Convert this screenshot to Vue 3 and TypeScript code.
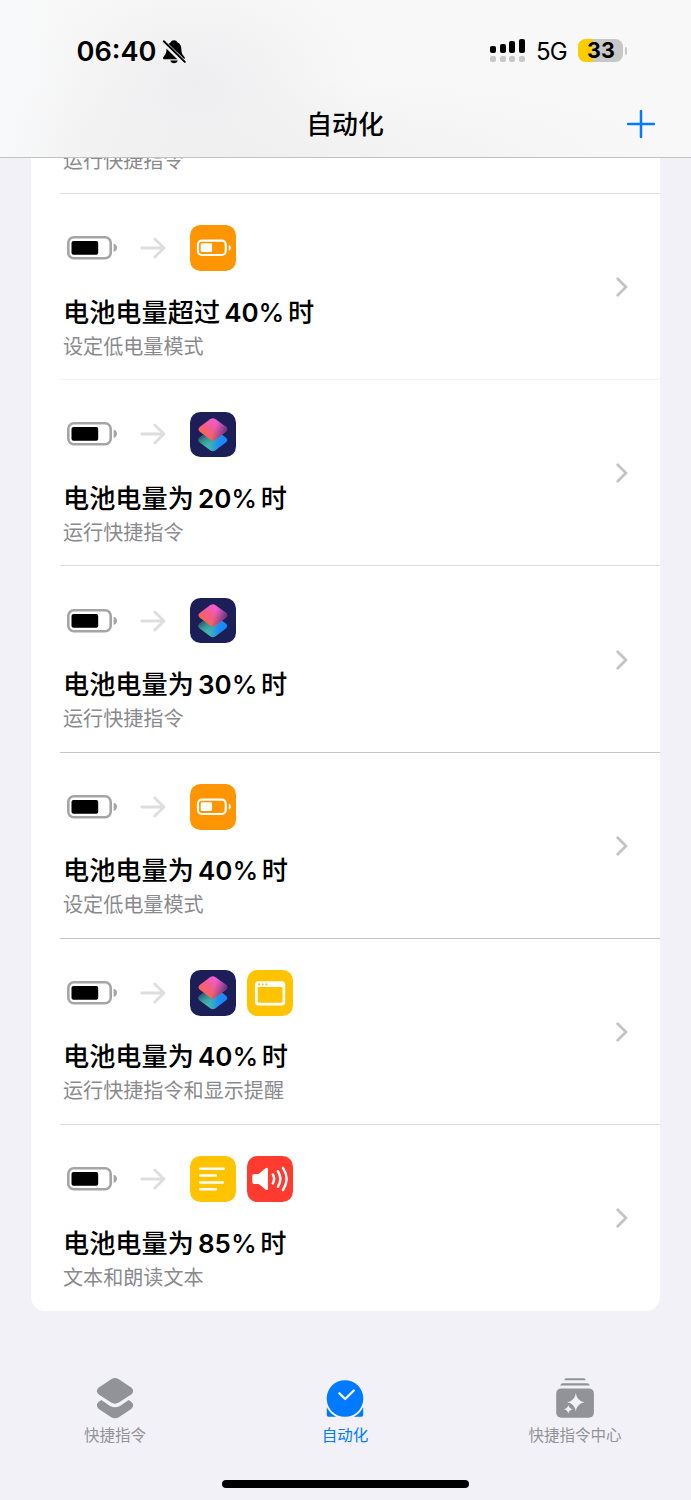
<script setup lang="ts">
type Action = 'power' | 'shortcut' | 'alert' | 'text' | 'speak'

interface Automation {
  prefix: string
  level: number
  subtitle: string
  actions: Action[]
  tone: string
}

const automations: Automation[] = [
  { prefix: '电池电量超过', level: 40, subtitle: '设定低电量模式', actions: ['power'], tone: 'faint' },
  { prefix: '电池电量为', level: 20, subtitle: '运行快捷指令', actions: ['shortcut'], tone: 'light' },
  { prefix: '电池电量为', level: 30, subtitle: '运行快捷指令', actions: ['shortcut'], tone: 'dark' },
  { prefix: '电池电量为', level: 40, subtitle: '设定低电量模式', actions: ['power'], tone: 'dark' },
  { prefix: '电池电量为', level: 40, subtitle: '运行快捷指令和显示提醒', actions: ['shortcut', 'alert'], tone: 'light' },
  { prefix: '电池电量为', level: 85, subtitle: '文本和朗读文本', actions: ['text', 'speak'], tone: 'none' },
]

const signalBars = [7, 9, 12, 14.5]
</script>

<template>
  <div class="screen">
    <header class="top">
      <div class="status">
        <span class="time">06:40</span>
        <svg class="bell" viewBox="0 0 24 26">
          <path d="M12 1.2C10 1.2 8.9 2.3 8.5 3.6C5.6 4.8 4.6 7.4 4.5 10.5C4.3 15 2.9 16 1.4 18C.6 19.4 1.3 20.3 2.6 20.3H21.3C22.8 20.3 23.3 19.2 22.5 18C20.9 16 19.6 15 19.4 10.5C19.3 7.2 18.4 4.8 15.5 3.6C15.1 2.3 14 1.2 12 1.2Z" />
          <path d="M8.3 21.6H15.7C15.2 23.4 13.9 24.3 12 24.3S8.8 23.4 8.3 21.6Z" />
          <path class="gap" d="M1.4 3.2L22.4 23.6" />
          <path class="slash" d="M1.8 2.3L22.8 22.9" />
        </svg>
        <div class="signal">
          <span v-for="h in signalBars" :key="h" class="signal-col">
            <i class="bar" :style="{ height: h + 'px' }"></i>
            <i class="dot"></i>
          </span>
        </div>
        <span class="network">5G</span>
        <span class="charge">33</span>
        <i class="charge-nub"></i>
      </div>
      <div class="nav">
        <h1>自动化</h1>
        <svg class="plus" viewBox="0 0 28 28"><path d="M14 1V27M1 14H27" /></svg>
      </div>
    </header>

    <main>
      <section class="card">
        <div class="partial">
          <div class="subtitle">运行快捷指令</div>
        </div>
        <i class="line light"></i>
        <article v-for="(item, i) in automations" :key="i" class="row">
          <div class="body">
            <div class="flow">
              <svg class="battery" viewBox="0 0 51 24">
                <rect x="1.3" y="1.3" width="42.4" height="21" rx="5.6" fill="none" stroke="#a5a5a7" stroke-width="2.6" />
                <rect x="4.5" y="4.9" width="26.7" height="13.9" rx="2" />
                <path d="M46.6 7.7C51.2 8.6 51.2 15.1 46.6 16Z" fill="#a5a5a7" />
              </svg>
              <svg class="arrow" viewBox="0 0 26 22"><path d="M1.8 11H24M14.8 2L24 11L14.8 20" /></svg>
              <div class="tiles">
                <span v-for="action in item.actions" :key="action" class="tile" :class="action">
                  <svg v-if="action === 'power'" viewBox="0 0 46 46">
                    <rect x="8" y="15.8" width="28" height="14.4" rx="4" fill="none" stroke="#fff" stroke-width="2.2" />
                    <rect x="10.8" y="18.5" width="11.4" height="8.8" rx="1.3" fill="#fff" />
                    <path d="M39 20C41.9 20.8 41.9 25.2 39 26Z" fill="#fff" />
                  </svg>
                  <svg v-else-if="action === 'shortcut'" viewBox="0 0 46 46">
                    <defs>
                      <linearGradient :id="'low' + i" x1="9" y1="0" x2="37" y2="0" gradientUnits="userSpaceOnUse">
                        <stop offset="0" stop-color="#4cc9a2" />
                        <stop offset=".4" stop-color="#3eb3b5" />
                        <stop offset=".72" stop-color="#1d8cf5" />
                        <stop offset="1" stop-color="#1688ff" />
                      </linearGradient>
                      <linearGradient :id="'shade' + i" x1="12" y1="23" x2="21" y2="35" gradientUnits="userSpaceOnUse">
                        <stop offset="0" stop-color="#294674" />
                        <stop offset="1" stop-color="#38b59e" stop-opacity="0" />
                      </linearGradient>
                      <linearGradient :id="'high' + i" x1="27" y1="8" x2="15" y2="25" gradientUnits="userSpaceOnUse">
                        <stop offset="0" stop-color="#f45bdc" />
                        <stop offset=".55" stop-color="#f35c8a" />
                        <stop offset="1" stop-color="#fb6550" />
                      </linearGradient>
                      <linearGradient :id="'dusk' + i" x1="24" y1="17" x2="36" y2="21" gradientUnits="userSpaceOnUse">
                        <stop offset="0" stop-color="#76448c" stop-opacity="0" />
                        <stop offset="1" stop-color="#673079" />
                      </linearGradient>
                    </defs>
                    <path d="M20.2 18Q23 16 25.8 18L36 25.7Q39 28.2 36 30.7L25.8 38.4Q23 40.4 20.2 38.4L10 30.7Q7 28.2 10 25.7Z" :fill="`url(#low${i})`" />
                    <path d="M20.2 18Q23 16 25.8 18L36 25.7Q39 28.2 36 30.7L25.8 38.4Q23 40.4 20.2 38.4L10 30.7Q7 28.2 10 25.7Z" :fill="`url(#shade${i})`" />
                    <path d="M20.2 7.2Q23 5.2 25.8 7.2L36 14.9Q39 17.4 36 19.9L25.8 27.6Q23 29.6 20.2 27.6L10 19.9Q7 17.4 10 14.9Z" :fill="`url(#high${i})`" />
                    <path d="M20.2 7.2Q23 5.2 25.8 7.2L36 14.9Q39 17.4 36 19.9L25.8 27.6Q23 29.6 20.2 27.6L10 19.9Q7 17.4 10 14.9Z" :fill="`url(#dusk${i})`" />
                  </svg>
                  <svg v-else-if="action === 'alert'" viewBox="0 0 46 46">
                    <rect x="8" y="11.4" width="30.5" height="24.4" rx="3.6" fill="#fff" />
                    <rect x="10.8" y="17.2" width="25" height="15.8" rx="1.3" fill="#ffc300" />
                    <path d="M11.2 14.5H13.2M14.8 14.5H16.8M18.6 14.5H20.6" stroke="#ffc300" stroke-width="1.9" />
                  </svg>
                  <svg v-else-if="action === 'text'" viewBox="0 0 46 46">
                    <path d="M10.4 12.8H34M10.4 19.6H26M10.4 26.6H33M10.4 33.4H26" stroke="#fff" stroke-width="2.5" stroke-linecap="round" />
                  </svg>
                  <svg v-else viewBox="0 0 46 46">
                    <path d="M5.3 20Q5.3 18 7.3 18H11.8L18.6 12.3Q21.1 10.7 21.1 13.4V32.6Q21.1 35.4 18.6 33.7L11.8 28.3H7.3Q5.3 28.3 5.3 26.3Z" fill="#fff" />
                    <path d="M26 18.6Q28.6 23.1 26 27.6M31.1 15.2Q36.1 23.1 31.1 31M36.2 12Q43.6 23.1 36.2 34.2" fill="none" stroke="#fff" stroke-width="2.5" stroke-linecap="round" />
                  </svg>
                </span>
              </div>
            </div>
            <h2>{{ item.prefix }}<b>{{ item.level }}<span class="percent">%</span></b>时</h2>
            <div class="subtitle">{{ item.subtitle }}</div>
          </div>
          <svg class="chevron" viewBox="0 0 12 20"><path d="M1.7 1.7L10 10L1.7 18.3" /></svg>
          <i v-if="item.tone !== 'none'" class="line" :class="item.tone"></i>
        </article>
      </section>
    </main>

    <nav class="tabs">
      <a class="tab">
        <svg viewBox="0 0 40 44">
          <path d="M16.2 3.2Q20 .9 23.8 3.2L36.2 11.4Q40.2 15 36.2 18.4L23.8 26.6Q20 28.9 16.2 26.6L3.8 18.4Q-.2 15 3.8 11.4Z" />
          <path d="M6.3 24L3.8 25.8Q-.2 29.3 3.8 33L16.2 41.2Q20 43.5 23.8 41.2L36.2 33Q40.2 29.3 36.2 25.8L33.7 24L25 29.9Q20 32.6 15 29.9Z" />
        </svg>
        <span>快捷指令</span>
      </a>
      <a class="tab active">
        <svg viewBox="0 0 40 44">
          <circle cx="20" cy="22.5" r="18.3" />
          <path d="M1.8 31.2C4 35.6 7.3 38.8 11.2 40.7H3.4Q1.8 40.7 1.8 39.1ZM38.2 31.2C36 35.6 32.7 38.8 28.8 40.7H36.6Q38.2 40.7 38.2 39.1Z" />
          <path class="hands" d="M14.4 17.3L20.2 23L28.8 14.5" />
        </svg>
        <span>自动化</span>
      </a>
      <a class="tab">
        <svg viewBox="0 0 40 44">
          <path d="M9.2 4.3Q9.7 2.3 11.2 2.3H28.7Q30.3 2.3 30.8 4.3ZM5.1 9.4Q5.9 7.2 7.9 7.2H32.1Q34.1 7.2 34.9 9.4Z" />
          <rect x="1.2" y="12.4" width="37.7" height="29.4" rx="5" />
          <path class="spark" d="M20.8 17.2Q22 24.8 29.4 26.2Q22 27.6 20.8 35.2Q19.6 27.6 12.2 26.2Q19.6 24.8 20.8 17.2ZM13.3 29Q13.9 32.5 17.9 33.3Q13.9 34.1 13.3 37.6Q12.7 34.1 8.9 33.3Q12.7 32.5 13.3 29Z" />
        </svg>
        <span>快捷指令中心</span>
      </a>
    </nav>
    <i class="home"></i>
  </div>
</template>

<style>
html,
body {
  background: #f2f1f7;
}
</style>

<style scoped>
.screen {
  width: 691px;
  height: 1500px;
  display: flex;
  flex-direction: column;
  overflow: hidden;
  background: #f2f1f7;
  color: #000;
  font-family: Inter, 'Noto Sans CJK SC', sans-serif;
}
.top {
  box-sizing: border-box;
  flex: none;
  height: 158px;
  border-bottom: 1px solid #c2c2c4;
  background:
    linear-gradient(90deg, #f8f9fb 0, rgba(248, 249, 251, 0) 70px),
    radial-gradient(ellipse 170px 120px at 195px 85px, #eeeef0 0%, rgba(238, 238, 240, 0) 100%),
    radial-gradient(ellipse 420px 80px at 250px 158px, #f0f0f0 0%, rgba(240, 240, 240, 0) 100%),
    #f8f8f8;
}
.status {
  display: flex;
  align-items: center;
  height: 102px;
  padding-left: 76.5px;
}
.time {
  width: 85.5px;
  font-size: 27.2px;
  font-weight: 600;
  white-space: nowrap;
}
.bell {
  width: 24px;
  height: 26px;
  margin-top: 1px;
}
.gap,
.slash {
  fill: none;
  stroke-linecap: round;
}
.gap {
  stroke: #f0f0f2;
  stroke-width: 5;
}
.slash {
  stroke: #000;
  stroke-width: 1.9;
}
.signal {
  display: flex;
  align-items: flex-end;
  gap: 3.4px;
  height: 24px;
  margin-left: 304px;
  margin-top: -2px;
}
.signal-col {
  display: flex;
  flex-direction: column;
  gap: 3px;
}
.bar,
.dot {
  display: block;
  width: 6.2px;
  border-radius: 2px;
  background: #000;
}
.dot {
  height: 6px;
  background: #c8c8c9;
}
.network {
  width: 42.5px;
  margin-left: 11px;
  font-size: 24px;
  letter-spacing: -0.7px;
  margin-top: 1px;
}
.charge {
  width: 45px;
  height: 23px;
  border-radius: 7.5px;
  background: linear-gradient(90deg, #ffcc00 33.5%, #c7c7c8 33.5%);
  font-size: 21.5px;
  font-weight: 700;
  line-height: 23px;
  text-align: center;
  margin-top: -1px;
}
.charge-nub {
  width: 2.6px;
  height: 7.5px;
  margin-left: 1.3px;
  border-radius: 0 4px 4px 0;
  background: #c7c7c8;
}
.nav {
  display: grid;
  grid-template-columns: 1fr auto 1fr;
  align-items: center;
  height: 42px;
  padding: 0 36px;
}
.nav h1 {
  grid-column: 2;
  margin: 2px 0 0 -1px;
  font-size: 25.9px;
  font-weight: 500;
  line-height: 42px;
}
.plus {
  justify-self: end;
  width: 28px;
  height: 28px;
  fill: none;
  stroke: #007aff;
  stroke-width: 2.5;
  stroke-linecap: round;
}
main {
  flex: none;
  height: 1199px;
  padding: 0 31.5px 0 31px;
  overflow: hidden;
}
.card {
  border-radius: 0 0 14px 14px;
  background: #fff;
}
.partial {
  display: flex;
  align-items: flex-end;
  height: 35.2px;
  padding: 0 0 0 32px;
}
.partial .subtitle {
  margin-bottom: 16.4px;
}
.line {
  display: block;
  height: 1px;
  margin-left: 29px;
}
.light {
  background: #dedee0;
}
.faint {
  background: #f1f1f2;
}
.dark {
  background: #c6c6c8;
}
.row {
  display: grid;
  grid-template-columns: 1fr 12px;
  grid-template-rows: 1fr auto;
  height: 186.15px;
  padding: 0 32px;
}
.row .line {
  grid-column: 1 / 3;
  margin: 0 -32px 0 -3px;
}
.body {
  padding-top: 31.1px;
}
.flow {
  display: flex;
  align-items: center;
  height: 46px;
}
.battery {
  width: 51px;
  height: 24px;
  margin-left: 3.7px;
}
.arrow {
  width: 26px;
  height: 22px;
  margin-left: 22.4px;
  fill: none;
  stroke: #dededf;
  stroke-width: 2.9;
  stroke-linecap: round;
  stroke-linejoin: round;
}
.tiles {
  display: flex;
  gap: 11.3px;
  margin-left: 23.8px;
}
.tile {
  width: 45.7px;
  height: 45.7px;
  border-radius: 10.5px;
  overflow: hidden;
}
.tile svg {
  display: block;
  width: 100%;
  height: 100%;
}
.power {
  background: #ff9500;
}
.shortcut {
  background: #1c1e58;
}
.alert,
.text {
  background: #ffc300;
}
.speak {
  background: #ff3b30;
}
h2 {
  margin: 23.6px 0 0;
  font-size: 26.2px;
  font-weight: 500;
  line-height: 36px;
  white-space: nowrap;
}
h2 b {
  margin: 0 3.5px 0 4px;
  font-size: 26px;
  font-weight: 600;
}
.percent {
  font-weight: 500;
}
.subtitle {
  font-size: 20.1px;
  line-height: 32px;
  color: #8a8a8e;
  white-space: nowrap;
}
.chevron {
  align-self: center;
  width: 12px;
  height: 20px;
  margin-top: 1px;
  fill: none;
  stroke: #c4c4c6;
  stroke-width: 2.8;
  stroke-linecap: round;
  stroke-linejoin: round;
}
.tabs {
  display: grid;
  grid-template-columns: repeat(3, 1fr);
  width: 690px;
  height: 90px;
  padding-top: 19px;
}
.tab {
  display: flex;
  flex-direction: column;
  align-items: center;
  color: #929397;
  font-size: 15.5px;
  line-height: 20px;
}
.tab svg {
  width: 40px;
  height: 44px;
  margin-bottom: 6px;
  fill: currentColor;
}
.active {
  color: #007aff;
}
.tab .hands {
  fill: none;
  stroke: #f2f1f7;
  stroke-width: 2.4;
  stroke-linecap: round;
  stroke-linejoin: round;
}
.spark {
  fill: #f2f1f7;
}
.home {
  align-self: center;
  width: 247px;
  height: 8px;
  margin-top: 13.5px;
  border-radius: 4px;
  background: #000;
}
</style>
